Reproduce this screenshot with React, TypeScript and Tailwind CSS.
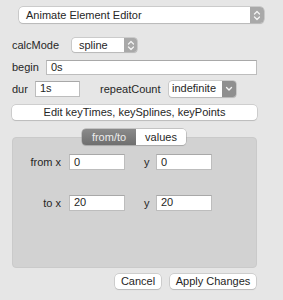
import React from "react"

function Updown() {
  return (
    <svg width="8" height="11" viewBox="0 0 8 11" fill="none" stroke="#f4f4f4" strokeWidth="1.3" strokeLinecap="round" strokeLinejoin="round">
      <path d="M1.5 4 L4 1.5 L6.5 4" />
      <path d="M1.5 7 L4 9.5 L6.5 7" />
    </svg>
  )
}

function Down() {
  return (
    <svg width="8" height="6" viewBox="0 0 8 6" fill="none" stroke="#f4f4f4" strokeWidth="1.4" strokeLinecap="round" strokeLinejoin="round">
      <path d="M1.5 1.5 L4 4 L6.5 1.5" />
    </svg>
  )
}

function Field({ value, className }: { value: string; className: string }) {
  return (
    <div className={"flex items-center bg-white border border-[#bdbdbd] border-t-[#a8a8a8] pl-[4px] leading-none text-[#1e1e1e] " + className}>
      {value}
    </div>
  )
}

export default function App() {
  return (
    <div className="w-[283px] h-[300px] bg-[#e6e6e6] text-[#262626] text-[11px] flex flex-col" style={{ fontFamily: '"Liberation Sans", Arial, sans-serif' }}>

      {/* editor select */}
      <div className="mt-[7px] ml-[19px] w-[245px] h-[16px] flex rounded-[4px] bg-white shadow-[0_0_0_0.5px_#b0b0b0,0_1px_1px_rgba(0,0,0,0.15)] overflow-hidden">
        <div className="flex-1 flex items-center pl-[7px] leading-none">Animate Element Editor</div>
        <div className="w-[14px] flex items-center justify-center bg-[#a9a9a9]"><Updown /></div>
      </div>

      {/* calcMode */}
      <div className="mt-[15px] flex items-center h-[14px]">
        <span className="ml-[12px] w-[60px]">calcMode</span>
        <div className="w-[65px] h-[14px] flex rounded-[3px] bg-white shadow-[0_0_0_0.5px_#b0b0b0,0_1px_1px_rgba(0,0,0,0.15)] overflow-hidden">
          <div className="flex-1 flex items-center pl-[7px] leading-none">spline</div>
          <div className="w-[13px] flex items-center justify-center bg-[#a9a9a9]"><Updown /></div>
        </div>
      </div>

      {/* begin */}
      <div className="mt-[7px] flex items-center">
        <span className="ml-[12px] w-[34px]">begin</span>
        <Field value="0s" className="w-[211px] h-[15px]" />
      </div>

      {/* dur / repeatCount */}
      <div className="mt-[5px] flex items-center">
        <span className="ml-[12px] w-[23px]">dur</span>
        <Field value="1s" className="w-[45px] h-[16px]" />
        <span className="ml-[20px] w-[69px]">repeatCount</span>
        <div className="w-[67px] h-[16px] flex rounded-[3px] bg-white shadow-[0_0_0_0.5px_#b0b0b0,0_1px_1px_rgba(0,0,0,0.15)] overflow-hidden">
          <div className="flex-1 flex items-center pl-[3px] leading-none">indefinite</div>
          <div className="w-[14px] flex items-center justify-center bg-[#8f8f8f]"><Down /></div>
        </div>
      </div>

      {/* edit button */}
      <div className="mt-[8px] ml-[12px] w-[245px] h-[15px] flex items-center justify-center rounded-[4px] bg-white shadow-[0_0_0_0.5px_#b5b5b5,0_1px_1px_rgba(0,0,0,0.15)] leading-none">
        Edit keyTimes, keySplines, keyPoints
      </div>

      {/* tabs */}
      <div className="relative z-10 mt-[9px] ml-[82px] w-[104px] h-[16px] flex rounded-[4px] overflow-hidden shadow-[0_0_0_0.5px_#a0a0a0,0_1px_1px_rgba(0,0,0,0.15)] leading-none">
        <div className="w-[54px] flex items-center justify-center bg-gradient-to-b from-[#8a8a8a] to-[#6f6f6f] text-[#ececec]">from/to</div>
        <div className="flex-1 flex items-center justify-center bg-white">values</div>
      </div>

      {/* group box */}
      <div className="-mt-[8px] ml-[12px] w-[245px] h-[131px] rounded-[4px] bg-[#d2d2d2] border border-[#cacaca] flex flex-col">
        <div className="mt-[16px] flex items-center">
          <span className="w-[48px] text-right">from x</span>
          <Field value="0" className="ml-[8px] w-[56px] h-[16px]" />
          <span className="ml-[19px] w-[12px]">y</span>
          <Field value="0" className="w-[56px] h-[16px]" />
        </div>
        <div className="mt-[24px] flex items-center">
          <span className="w-[48px] text-right">to x</span>
          <Field value="20" className="ml-[8px] w-[56px] h-[16px]" />
          <span className="ml-[19px] w-[12px]">y</span>
          <Field value="20" className="w-[56px] h-[16px]" />
        </div>
      </div>

      {/* actions */}
      <div className="mt-[6px] flex">
        <div className="ml-[115px] w-[46px] h-[15px] flex items-center justify-center rounded-[4px] bg-white shadow-[0_0_0_0.5px_#b5b5b5,0_1px_1px_rgba(0,0,0,0.15)] leading-none">Cancel</div>
        <div className="ml-[9px] w-[86px] h-[15px] flex items-center justify-center rounded-[4px] bg-white shadow-[0_0_0_0.5px_#b5b5b5,0_1px_1px_rgba(0,0,0,0.15)] leading-none">Apply Changes</div>
      </div>
    </div>
  )
}
